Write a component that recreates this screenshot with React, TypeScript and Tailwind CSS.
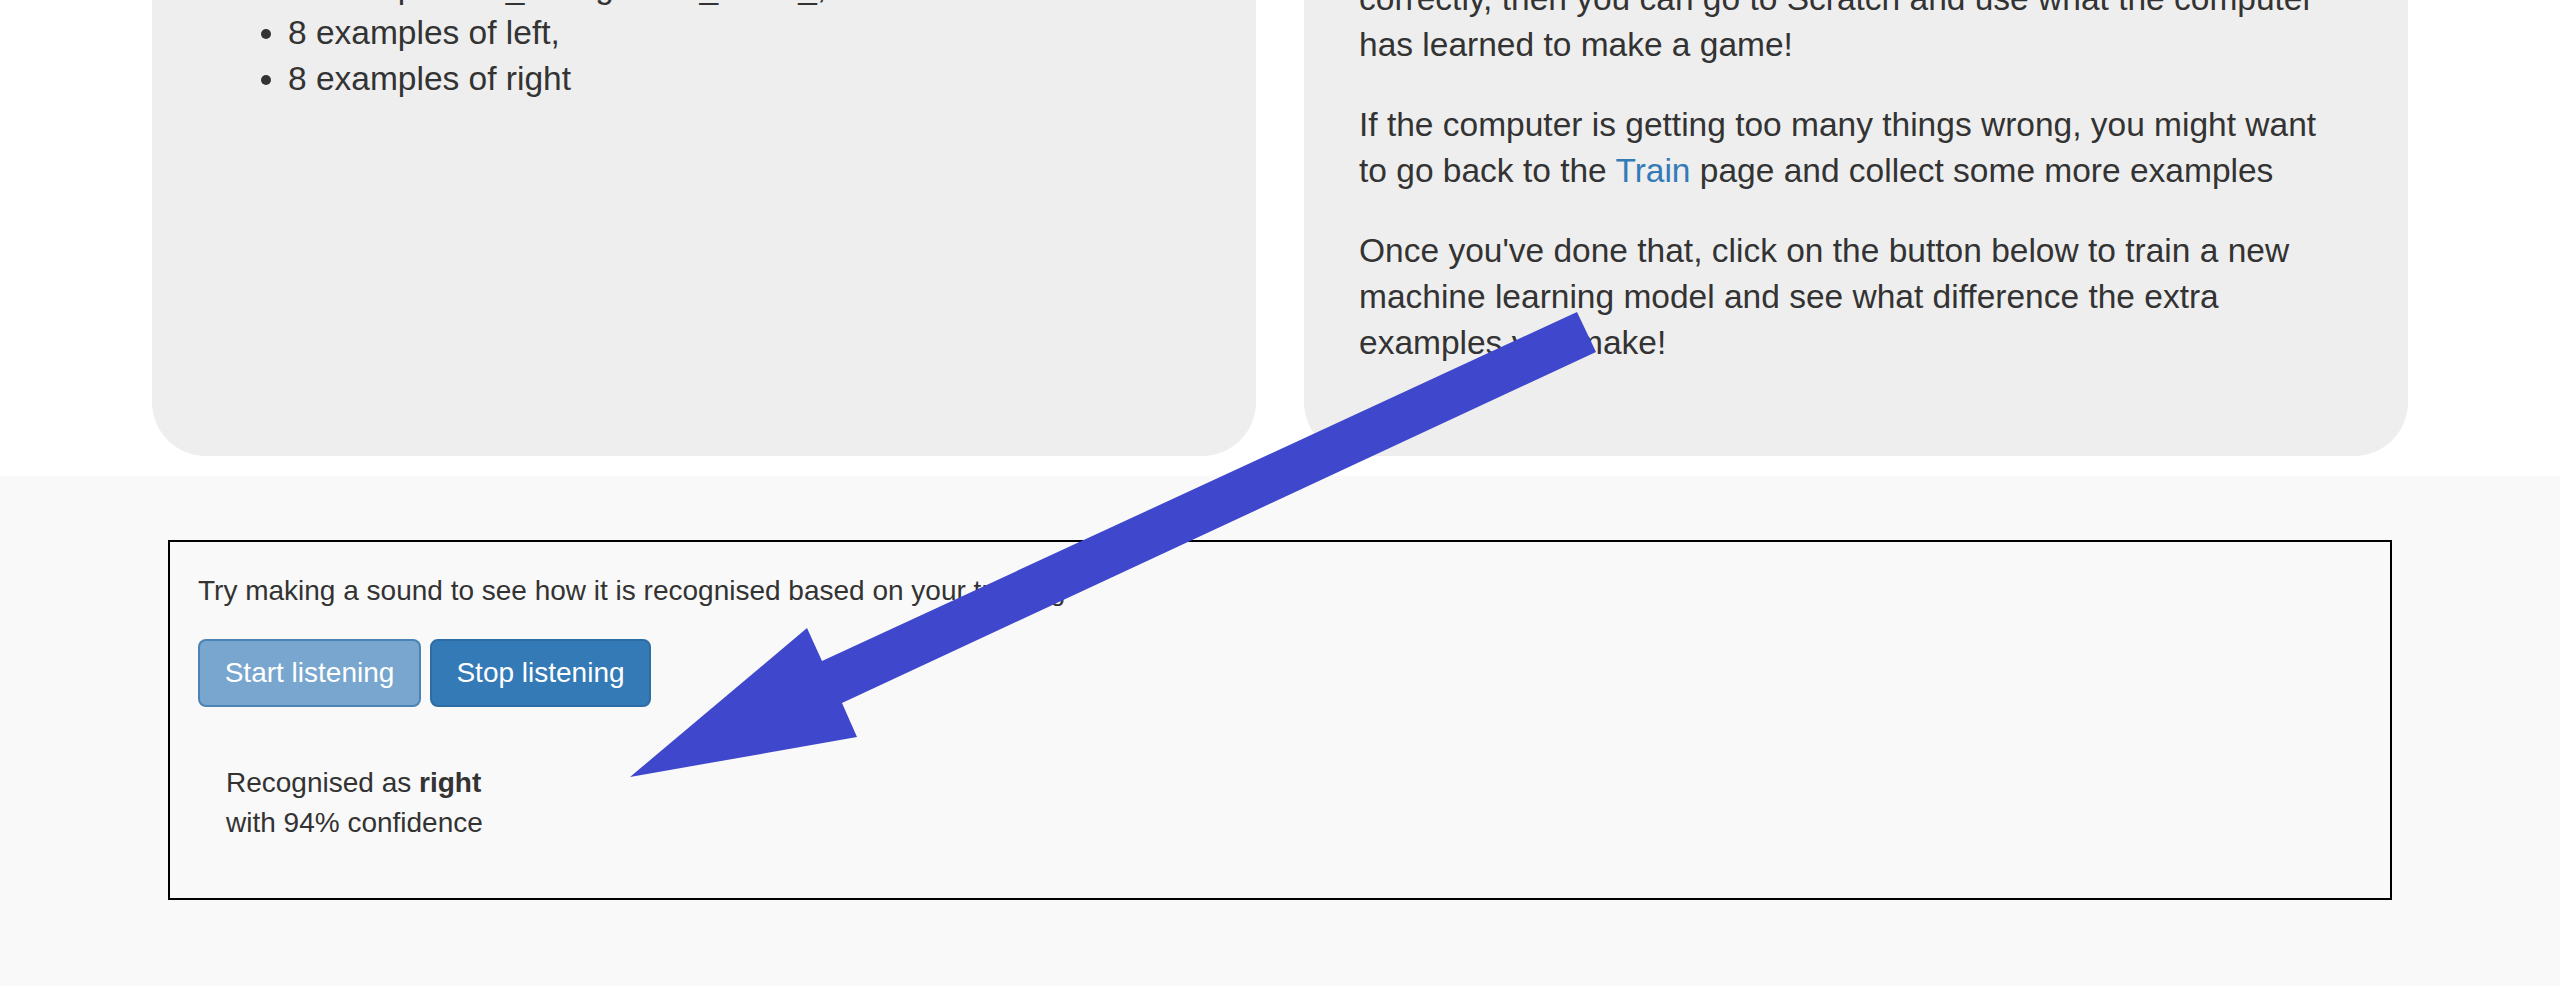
import React from "react";

const font = { fontFamily: '"Liberation Sans", Arial, sans-serif' };

export default function App() {
  return (
    <div
      className="relative w-[2560px] h-[986px] overflow-hidden bg-white text-[#333333]"
      style={font}
    >
      {/* Top section (scrolled so that its upper part is off screen) */}
      <div className="-mt-[100px] px-[152px] grid grid-cols-2 gap-[48px]">
        <div className="bg-[#eeeeee] rounded-[54px] px-[55px] pt-[64.4px] pb-[60px] text-[33.5px] leading-[46px]">
          <ul className="list-disc pl-[81px] m-0">
            <li className="whitespace-nowrap">8 examples of _background_noise_,</li>
            <li className="whitespace-nowrap">8 examples of left,</li>
            <li className="whitespace-nowrap">8 examples of right</li>
          </ul>
        </div>
        <div className="bg-[#eeeeee] rounded-[54px] px-[55px] pt-[76.4px] pb-[89.6px] text-[33.5px] leading-[46px]">
          <p className="mb-[34px] whitespace-nowrap">
            correctly, then you can go to Scratch and use what the computer
            <br />
            has learned to make a game!
          </p>
          <p className="mb-[34px] whitespace-nowrap">
            If the computer is getting too many things wrong, you might want
            <br />
            to go back to the <span className="text-[#337ab7]">Train</span> page and collect some more examples
          </p>
          <p className="whitespace-nowrap">
            Once you've done that, click on the button below to train a new
            <br />
            machine learning model and see what difference the extra
            <br />
            examples you make!
          </p>
        </div>
      </div>

      {/* Bottom section */}
      <div className="mt-[20px] bg-[#f9f9f9] px-[168px] pt-[64px] pb-[120px]">
        <div className="border-2 border-black bg-[#f9f9f9] px-[28px] pt-[29px] pb-[55px] text-[28px] leading-[40px]">
          <p className="mb-[28px]">
            Try making a sound to see how it is recognised based on your training
          </p>
          <div className="flex gap-[9px]">
            <button
              disabled
              className="h-[68px] w-[223px] rounded-[8px] border-2 border-[#2e6da4]/60 bg-[#337ab7]/65 text-white text-[28px] leading-[40px]"
            >
              Start listening
            </button>
            <button className="h-[68px] w-[221px] rounded-[8px] border-2 border-[#2e6da4] bg-[#337ab7] text-white text-[28px] leading-[40px]">
              Stop listening
            </button>
          </div>
          <div className="mt-[56px] pl-[28px]">
            <div>
              Recognised as <b className="font-bold">right</b>
            </div>
            <div>with 94% confidence</div>
          </div>
        </div>
      </div>

      {/* Annotation arrow drawn over the page */}
      <svg
        className="absolute left-0 top-0 pointer-events-none"
        width="2560"
        height="986"
        viewBox="0 0 2560 986"
      >
        <polygon
          fill="#3f48cc"
          points="1577,312 1596,352 842,703 857,737 630,777 807,628 822,661"
        />
      </svg>
    </div>
  );
}
